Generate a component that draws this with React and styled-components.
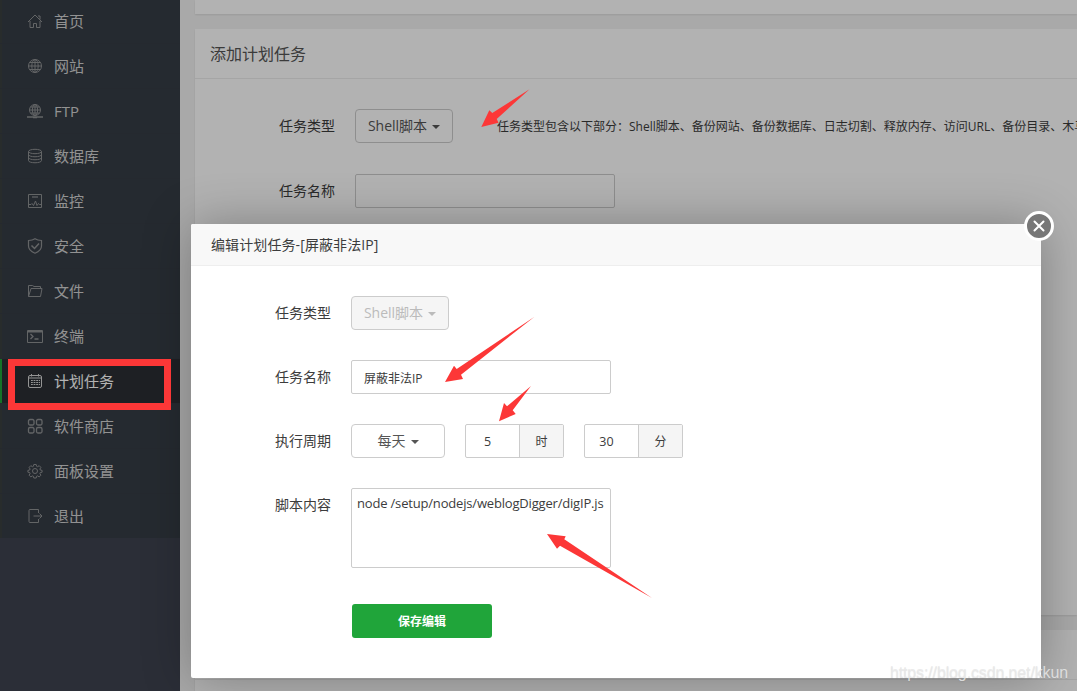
import React from 'react';
import styled, { createGlobalStyle } from 'styled-components';

const GlobalStyle = createGlobalStyle`
  *, *::before, *::after { box-sizing: border-box; }
  body {
    margin: 0;
    overflow: hidden;
    background: #f3f3f3;
    font-family: "Open Sans", "Noto Sans CJK SC", sans-serif;
    font-size: 12px;
    color: #3c3c3c;
  }
`;

const Page = styled.div`
  position: relative;
  display: flex;
  width: 1077px;
  height: 691px;
  overflow: hidden;
`;

const Sidebar = styled.nav`
  flex: 0 0 180px;
  background: #3e434f;
`;

const Menu = styled.ul`
  display: flex;
  flex-direction: column;
  gap: 1px;
  margin: -1px 0 0;
  padding: 0;
  list-style: none;
  background: #353c44;
`;

const MenuItem = styled.li`
  display: flex;
  align-items: center;
  gap: 11px;
  height: 44px;
  padding-left: 25px;
  border-left: 2px solid ${(p) => (p.$active ? '#20a53a' : '#3a3f40')};
  background: ${(p) => (p.$active ? '#2b2f34' : '#363d46')};
  color: ${(p) => (p.$active ? '#fff' : '#d2d2d2')};
  font-size: 15px;
  line-height: 20px;

  svg { color: ${(p) => (p.$active ? '#d5d5d5' : '#8f9193')}; }
`;

const MenuIcon = styled.svg`
  flex: none;
  width: 16px;
  height: 16px;
  fill: none;
  stroke: currentColor;
  stroke-width: 1;
`;

const Main = styled.main`
  display: flex;
  flex: 1;
  flex-direction: column;
  gap: 15px;
  min-width: 0;
  padding-left: 15px;
`;

const Panel = styled.section`
  flex: 0 0 ${(p) => p.$height}px;
  background: #fff;
  box-shadow: 0 1px 2px rgba(0, 0, 0, 0.1);
  overflow: hidden;
`;

const PanelTitle = styled.h2`
  height: 50px;
  margin: 0;
  padding: 1px 0 0 15px;
  border-bottom: 1px solid #ececec;
  font-size: 16px;
  font-weight: 400;
  line-height: 49px;
  color: #555;
`;

const Form = styled.div`
  display: flex;
  flex-direction: column;
  gap: ${(p) => p.$gap}px;
  padding: 30px 0 0 ${(p) => p.$indent}px;
`;

const Row = styled.div`
  display: flex;
  align-items: flex-start;
  white-space: nowrap;

  > * { flex-shrink: 0; }
`;

const Label = styled.label`
  width: 56px;
  margin-right: 20px;
  font-size: 14px;
  line-height: 33px;
`;

const Dropdown = styled.button`
  display: flex;
  align-items: center;
  justify-content: center;
  gap: 5px;
  width: ${(p) => p.$width}px;
  height: 34px;
  padding: 0 0 1px;
  border: 1px solid #ccc;
  border-radius: 4px;
  background: ${(p) => (p.disabled ? '#f5f5f5' : 'transparent')};
  color: ${(p) => (p.disabled ? '#bbb' : '#555')};
  font: 14px/20px "Open Sans", "Noto Sans CJK SC", sans-serif;

  &::after {
    content: "";
    margin-top: 3px;
    border: 4px solid transparent;
    border-top-color: currentColor;
    border-bottom: 0;
  }
`;

const Input = styled.input`
  width: ${(p) => p.$width}px;
  height: 34px;
  padding: 1px 12px 0;
  border: 1px solid #ccc;
  border-radius: 2px;
  background: transparent;
  color: #3c3c3c;
  font: 12px/18px "Open Sans", "Noto Sans CJK SC", sans-serif;
`;

const Hint = styled.span`
  height: 34px;
  margin-left: 44px;
  padding-top: 1px;
  line-height: 34px;
`;

const UnitGroup = styled.div`
  display: flex;
  width: 99px;
  height: 34px;
  margin-left: 20px;
  border: 1px solid #ccc;
  border-radius: 2px;
  line-height: 32px;
  text-align: center;
`;

const UnitValue = styled.span`
  width: 54px;
  padding: 1px 10px 0 0;
  border-right: 1px solid #ccc;
  font-size: 12.5px;
  line-height: 31px;
`;

const UnitName = styled.span`
  flex: 1;
  padding-top: 1px;
  background: #f5f5f5;
  line-height: 31px;
`;

const Script = styled.textarea`
  width: 260px;
  height: 80px;
  padding: 5px;
  border: 1px solid #ccc;
  border-radius: 2px;
  resize: none;
  overflow: hidden;
  white-space: pre;
  color: #3c3c3c;
  font: 13px/18px "Open Sans", "Noto Sans CJK SC", sans-serif;
  letter-spacing: -0.18px;
`;

const SaveButton = styled.button`
  width: 140px;
  height: 34px;
  margin: 6px 0 0 77px;
  padding: 1px 0 0;
  border: 0;
  border-radius: 3px;
  background: #20a53a;
  color: #fff;
  font: 700 12px/33px "Open Sans", "Noto Sans CJK SC", sans-serif;
`;

const Shade = styled.div`
  position: absolute;
  inset: 0;
  background: rgba(0, 0, 0, 0.3);
`;

const Dialog = styled.div`
  position: absolute;
  left: 191px;
  top: 224px;
  width: 850px;
  height: 454px;
  border-radius: 2px;
  background: #fff;
  box-shadow: 1px 1px 50px rgba(0, 0, 0, 0.3);
`;

const DialogTitle = styled.header`
  height: 42px;
  padding-left: 20px;
  border-bottom: 1px solid #eee;
  border-radius: 2px 2px 0 0;
  background: #f8f8f8;
  font-size: 14px;
  line-height: 41px;
  letter-spacing: 0.1px;
`;

const CloseButton = styled.button`
  position: absolute;
  top: -13px;
  right: -13px;
  display: flex;
  align-items: center;
  justify-content: center;
  width: 30px;
  height: 30px;
  padding: 0;
  border: 3px solid #fff;
  border-radius: 50%;
  background: #777;
`;

const Highlight = styled.div`
  position: absolute;
  left: 8px;
  top: 359px;
  width: 163px;
  height: 51px;
  border: 7px solid #fc3737;
`;

const Arrows = styled.svg`
  position: absolute;
  inset: 0;
  pointer-events: none;
  fill: #fc3737;
`;

const Watermark = styled.div`
  position: absolute;
  right: 9px;
  bottom: 8px;
  font: 16px/20px "Liberation Sans", sans-serif;
  letter-spacing: -0.13px;
  color: rgba(232, 232, 232, 0.85);
  text-shadow: 0 1px 1px rgba(120, 120, 120, 0.2);
`;

const items = [
  ['首页', <path d="M1 9 8 2l7 7M3 8v6.500h3.500v-4h3v4H13V8M11 3h2v3.500" />],
  ['网站', <><circle cx="8" cy="8" r="6.500" /><ellipse cx="8" cy="8" rx="3.200" ry="6.500" /><path d="M8 1.500v13M1.500 8h13M2.500 4.500h11M2.500 11.500h11" /></>],
  ['FTP', <><circle cx="8" cy="7" r="5.500" /><ellipse cx="8" cy="7" rx="2.600" ry="5.500" /><path d="M8 1.500v11M2.500 7h11M3.500 4h9M3.500 10h9" /><path d="M0 14h16M6 14.500h4" strokeWidth="1.500" /></>],
  ['数据库', <><ellipse cx="8" cy="3.500" rx="6.500" ry="2.200" /><path d="M1.500 3.500v9c0 3 13 3 13 0v-9M1.500 6.500c0 3 13 3 13 0M1.500 9.500c0 3 13 3 13 0" /></>],
  ['监控', <><path d="M1.500 1.500h13v13h-13z" /><path d="M5 4h6" strokeWidth="2" opacity=".6" /><path d="M2 11.500h2l1-1 1.500 2L8.500 8l1.500 4.500 1.500-2 1 1h2" /></>],
  ['安全', <><path d="M8 .8C6 2.200 4 2.500 1.500 2.500V8c0 3.300 3 5.800 6.500 7.200 3.500-1.400 6.500-3.900 6.500-7.200V2.500C12 2.500 10 2.200 8 .8z" strokeWidth="1.200" /><path d="m4.500 7.500 3 3 4.500-5" strokeWidth="1.500" /></>],
  ['文件', <path d="M1.500 13.500v-11h4l1.500 1h6.500v2M1.500 13.500l2.500-8h11l-1.500 8z" />],
  ['终端', <><path d="M.5 2.500h15v12H.5z" /><path d="M1 3.500h14" strokeWidth="2" /><path d="m3.500 6 2.500 2.500L3.500 11M7.500 11h4" strokeWidth="1.300" /></>],
  ['计划任务', <><rect x="1.500" y="2.500" width="13" height="12" rx="1.500" /><path d="M4.500 1v2.500M11.500 1v2.500M2 5h12" /><path d="M4 7.500h9M4 9.500h9M4 11.500h9" strokeWidth="1.200" strokeDasharray="1.800 .8" /></>],
  ['软件商店', <g strokeWidth="1.300"><rect x="1.500" y="1.500" width="5.500" height="5.500" rx="1.500" /><rect x="9.500" y="1.500" width="5.500" height="5.500" rx="1.500" /><rect x="1.500" y="9.500" width="5.500" height="5.500" rx="1.500" /><rect x="9.500" y="9.500" width="5.500" height="5.500" rx="1.500" /></g>],
  ['面板设置', <><circle cx="8" cy="8" r="2.500" /><path d="M6.800 1.500h2.400l.4 1.800 1 .4 1.600-1 1.700 1.700-1 1.600.4 1 1.800.4v1.800l-1.800.4-.4 1 1 1.600-1.700 1.700-1.600-1-1 .4-.4 1.700H6.800l-.4-1.700-1-.4-1.600 1-1.700-1.700 1-1.600-.4-1L.9 9.200V7.400l1.800-.4.4-1-1-1.600 1.700-1.700 1.600 1 1-.4z" /></>],
  ['退出', <path d="M11.500 5V1.500H3q-1 0-1 1v11q0 1 1 1h8.500V11M6.500 8h8.500M12.500 5.500 15 8l-2.500 2.500" />],
];

export default function App() {
  return (
    <>
      <GlobalStyle />
      <Page>
        <Sidebar>
          <Menu>
            {items.map(([name, drawing]) => (
              <MenuItem key={name} $active={name === '计划任务'}>
                <MenuIcon viewBox="0 0 16 16">{drawing}</MenuIcon>
                {name}
              </MenuItem>
            ))}
          </Menu>
        </Sidebar>
        <Main>
          <Panel $height={14} />
          <Panel $height={586}>
            <PanelTitle>添加计划任务</PanelTitle>
            <Form $gap={31} $indent={84}>
              <Row>
                <Label>任务类型</Label>
                <Dropdown $width={98}>Shell脚本</Dropdown>
                <Hint>任务类型包含以下部分：Shell脚本、备份网站、备份数据库、日志切割、释放内存、访问URL、备份目录、木马</Hint>
              </Row>
              <Row>
                <Label>任务名称</Label>
                <Input $width={260} />
              </Row>
            </Form>
          </Panel>
          <Panel $height={100}>
            <PanelTitle />
          </Panel>
        </Main>
        <Shade />
        <Dialog>
          <DialogTitle>编辑计划任务-[屏蔽非法IP]</DialogTitle>
          <Form $gap={30} $indent={84}>
            <Row>
              <Label>任务类型</Label>
              <Dropdown $width={98} disabled>Shell脚本</Dropdown>
            </Row>
            <Row>
              <Label>任务名称</Label>
              <Input $width={260} defaultValue="屏蔽非法IP" />
            </Row>
            <Row>
              <Label>执行周期</Label>
              <Dropdown $width={94}>每天</Dropdown>
              <UnitGroup><UnitValue>5</UnitValue><UnitName>时</UnitName></UnitGroup>
              <UnitGroup><UnitValue>30</UnitValue><UnitName>分</UnitName></UnitGroup>
            </Row>
            <Row>
              <Label>脚本内容</Label>
              <Script spellCheck={false} defaultValue="node /setup/nodejs/weblogDigger/digIP.js" />
            </Row>
            <SaveButton>保存编辑</SaveButton>
          </Form>
          <CloseButton aria-label="关闭">
            <svg width="12" height="12" viewBox="0 0 12 12" stroke="#fff" strokeWidth="2" strokeLinecap="round">
              <path d="m1.500 1.500 9 9M10.500 1.500l-9 9" />
            </svg>
          </CloseButton>
        </Dialog>
        <Highlight />
        <Arrows width="1077" height="691" viewBox="0 0 1077 691">
          <path d="M481.300 127 489.300 110.300 492.300 113 529.500 89.300 496.700 119 498.500 122.700z" />
          <path d="M445 382 454 365.700 456.700 369 534.500 316.700 461 374.700 463 379z" />
          <path d="M499 421.200 504 403 507 406.300 531 386 512.700 410.300 515.700 414z" />
          <path d="M547 534 565.700 536.300 564.300 539.300 652 598 560 545.700 557 548.700z" />
        </Arrows>
        <Watermark>https://blog.csdn.net/kkun</Watermark>
      </Page>
    </>
  );
}
